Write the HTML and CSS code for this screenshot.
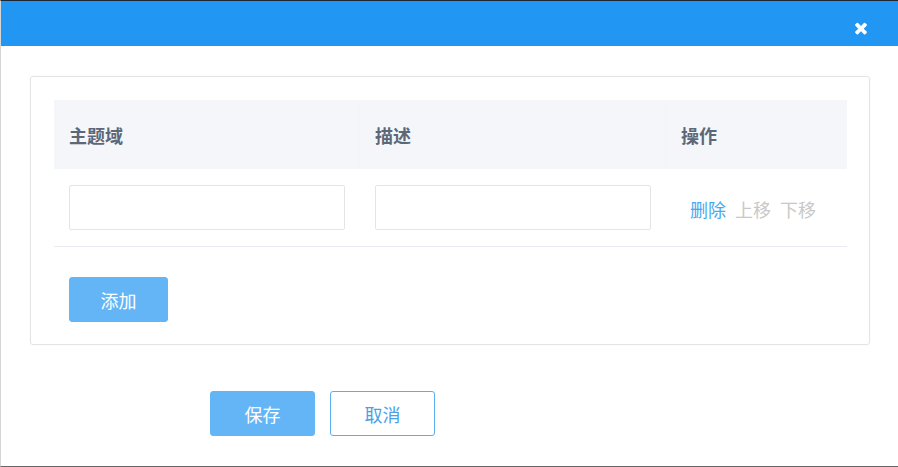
FILE: index.html
```html
<!DOCTYPE html>
<html>
<head>
    <meta charset="UTF-8">
    <link rel="stylesheet" href="styles.css">
</head>
<body>
    <div class="dialog">
        <div class="dialog-header">
            <svg class="close" viewBox="0 0 1408 1792" width="14" height="18">
                <path fill="#fff" d="M1298 1322q0 40-28 68l-136 136q-28 28-68 28t-68-28l-294-294-294 294q-28 28-68 28t-68-28l-136-136q-28-28-28-68t28-68l294-294-294-294q-28-28-28-68t28-68l136-136q28-28 68-28t68 28l294 294 294-294q28-28 68-28t68 28l136 136q28 28 28 68t-28 68l-294 294 294 294q28 28 28 68z"/>
            </svg>
        </div>
        <div class="dialog-body">
            <div class="card">
                <div class="grid head">
                    <div class="cell">主题域</div>
                    <div class="cell">描述</div>
                    <div class="cell">操作</div>
                </div>
                <div class="grid row">
                    <div class="cell"><input class="field" type="text"></div>
                    <div class="cell"><input class="field" type="text"></div>
                    <div class="cell actions">
                        <a class="link">删除</a>
                        <a class="link disabled">上移</a>
                        <a class="link disabled">下移</a>
                    </div>
                </div>
                <button class="btn btn-primary add">添加</button>
            </div>
            <div class="footer">
                <button class="btn btn-primary">保存</button>
                <button class="btn btn-plain">取消</button>
            </div>
        </div>
    </div>
</body>
</html>
```

FILE: styles.css
```css
body {
    margin: 0;
    background: #fff;
    font-family: "Noto Sans CJK SC", "Noto Sans", sans-serif;
}

.dialog {
    width: 898px;
    height: 467px;
    box-sizing: border-box;
    border-top: 1px solid #1d2733;
    border-left: 1px solid #d6d6d6;
    border-bottom: 1px solid #666;
    background: #fff;
}

.dialog-header {
    height: 45px;
    background: #2196f3;
    display: flex;
    justify-content: flex-end;
    align-items: flex-start;
    padding-right: 30px;
}

.close {
    margin-top: 18px;
}

.dialog-body {
    padding: 30px 28px 0 29px;
}

.card {
    border: 1px solid #e4e4e4;
    border-radius: 3px;
    box-shadow: 0 0 2px rgba(0, 0, 0, 0.06);
    padding: 23px 22px 22px 23px;
}

.grid {
    display: grid;
    grid-template-columns: 306px 306px 180px;
}

.head {
    height: 69px;
    background: #f5f6fa;
    color: #5c6878;
    font-size: 18px;
    font-weight: bold;
}

.head .cell {
    display: flex;
    align-items: center;
    padding-left: 15px;
    border-right: 1px solid #f3f4f8;
}

.head .cell:last-child {
    border-right: none;
}

.row {
    border-bottom: 1px solid #e8ecf0;
}

.row .cell {
    padding: 16px 15px;
    display: flex;
    align-items: center;
}

.field {
    width: 276px;
    height: 45px;
    box-sizing: border-box;
    border: 1px solid #e4e4e4;
    border-radius: 2px;
    outline: none;
}

.actions {
    gap: 9px;
}

.row .actions {
    padding-left: 24px;
    padding-top: 18px;
}

.link {
    font-size: 18px;
    color: #4aa8f0;
    cursor: pointer;
}

.link.disabled {
    color: #c8c8c8;
}

.btn {
    height: 45px;
    width: 105px;
    font-family: inherit;
    font-size: 18px;
    border-radius: 3px;
    cursor: pointer;
}

.btn-primary {
    background: #64b5f6;
    border: 1px solid #64b5f6;
    color: #fff;
}

.btn-plain {
    background: #fff;
    border: 1px solid #5aaef0;
    color: #4a9fe8;
}

.add {
    width: 99px;
    margin: 30px 0 0 15px;
    display: block;
}

.footer {
    display: flex;
    gap: 15px;
    padding: 46px 0 0 180px;
}
```
